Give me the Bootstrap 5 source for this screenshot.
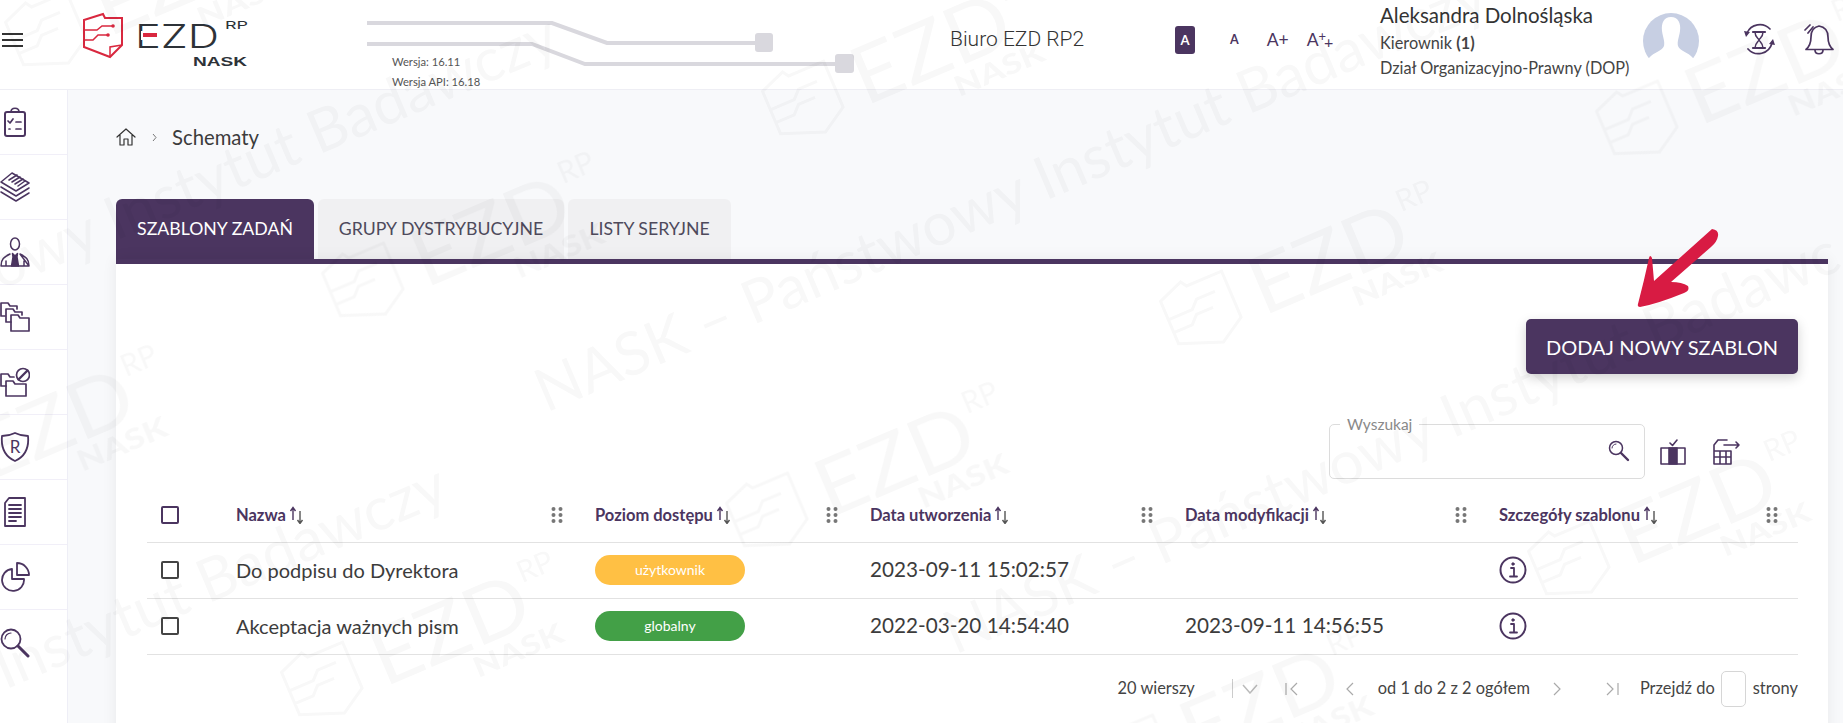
<!DOCTYPE html>
<html lang="pl">
<head>
    <meta charset="UTF-8">
    <meta name="viewport" content="width=device-width, initial-scale=1.0">
    <title>Schematy - EZD RP</title>
    <link href="https://cdn.jsdelivr.net/npm/bootstrap@5.3.0/dist/css/bootstrap.min.css" rel="stylesheet">
    <style>
        :root { --fiolet: #4b3560; }
        html, body { height: 100%; }
        body {
            font-family: "Lato", "Noto Sans", sans-serif;
            color: #3b3b3b;
            background: #f8f9fb;
            overflow: hidden;
            position: relative;
        }
        svg.ik { fill: none; stroke: var(--fiolet); stroke-linecap: round; stroke-linejoin: round; display: block; }

        /* naglowek */
        .top-bar { height: 90px; background: #fff; border-bottom: 1px solid #eeeef4; padding: 0; flex-wrap: nowrap; align-items: stretch; justify-content: flex-start; }
        .hamburger { width: 21px; margin: 33px 0 0 2px; height: 14px; display: flex; flex-direction: column; justify-content: space-between; }
        .hamburger span { height: 2px; background: #333; display: block; }
        .logo-box { width: 180px; margin-left: 58px; margin-top: 12px; }
        .wersje { position: relative; width: 500px; margin-left: 106px; font-size: 11.2px; color: #555; line-height: 20px; padding: 52px 0 0 25px; }
        .wersje svg { position: absolute; left: 0; top: 0; }
        .biuro { margin-left: 83px; width: 225px; font-family: "Roboto", sans-serif; font-weight: 300; font-size: 21px; color: #333; line-height: 78px; }
        .font-sizes { width: 205px; color: var(--fiolet); padding-top: 26px; }
        .fs-on { width: 20px; height: 28px; background: var(--fiolet); color: #fff; border-radius: 3px; font-size: 13px; font-weight: 700; text-align: center; line-height: 28px; }
        .fs-a { font-weight: 700; font-size: 12.5px; margin-left: 35px; line-height: 28px; }
        .fs-b { font-size: 17.5px; margin-left: 28px; line-height: 28px; }
        .fs-c { font-size: 17.5px; margin-left: 18px; line-height: 28px; }
        .fs-c sup { font-size: 13px; top: -.35em; }
        .fs-c sub { font-size: 16px; bottom: -.1em; margin-left: -2px; }
        .user-box { width: 263px; }
        .user-name { font-size: 20.5px; line-height: 30px; color: #333; white-space: nowrap; }
        .user-line { font-size: 16.3px; line-height: 25px; color: #444; white-space: nowrap; }
        .avatar-box { width: 56px; height: 45px; margin-top: 13px; overflow: hidden; }
        .right-icons { margin-left: 44px; gap: 29px; padding-top: 23px; }

        /* boczne menu */
        .side-menu { width: 68px; flex: none; background: #fff; border-right: 1px solid #eeeef6; }
        .side-menu .list-group-item { height: 65px; padding: 0; border: 0; border-bottom: 1px solid #f1eff8; border-radius: 0; display: flex; align-items: center; background: transparent; }

        /* tresc */
        .tresc { flex: 1; padding: 35px 15px 0 48px; min-width: 0; }
        .okruszki { height: 24px; margin-bottom: 50px; font-size: 20.3px; color: #3c3c3c; }
        .okruszki .sep { margin: 0 15px 0 16px; }

        .zakladki { border: 0; gap: 4px; }
        .zakladki .nav-link { height: 60px; border: 0; border-radius: 6px 6px 0 0; margin: 0; background: #f0f0f2; color: #4e4a5c; font-size: 17.7px; line-height: 60px; padding: 0; text-align: center; }
        .zakladki .nav-link.active { background: var(--fiolet); color: #fff; }
        .tab-a { width: 198px; } .tab-b { width: 246px; } .tab-c { width: 163px; }
        .panel { border: 0; border-radius: 0; border-top: 5px solid var(--fiolet); box-shadow: 0 0 14px rgba(0,0,0,.07); padding: 55px 30px 0 31px; height: 500px; }
        .przycisk-wrap { position: relative; }
        .btn-dodaj { background: var(--fiolet); color: #fff; border: 0; height: 55px; width: 272px; font-size: 20px; border-radius: 5px; box-shadow: 0 4px 12px rgba(0,0,0,.18); padding: 0; }
        .btn-dodaj:hover { background: var(--fiolet); color: #fff; }
        .strzalka { position: absolute; left: 106px; top: -93px; }

        .szukaj-row { margin-top: 50px; padding-right: 55px; gap: 15px; }
        .szukaj { position: relative; width: 316px; height: 55px; }
        .szukaj .form-control { height: 55px; border: 1px solid #dcdcdc; border-radius: 5px; box-shadow: none; }
        .szukaj label { position: absolute; left: 11px; top: -10px; background: #fff; padding: 0 7px; font-size: 15.5px; line-height: 20px; color: #8a8a8a; }
        .szukaj svg { position: absolute; right: 15px; top: 15px; }

        .tabela { table-layout: fixed; width: 100%; margin: 10px 0 0; }
        .tabela th, .tabela td { padding: 0; vertical-align: middle; border-bottom: 1px solid #e2e2e2; background: transparent; box-shadow: none; }
        .tabela th { height: 53px; color: var(--fiolet); font-size: 16.5px; font-weight: 700; }
        .tabela td { height: 56px; font-size: 20px; color: #3c3c3c; }
        .tabela td.data { font-size: 20.7px; }
        .c0 { width: 89px; } .c1 { width: 359px; } .c2 { width: 275px; } .c3 { width: 315px; } .c4 { width: 314px; }
        .kolumna { padding-right: 32px; }
        .kolumna-kon { padding-right: 20px; }
        .sort { width: 16px; height: 18px; margin-left: 3px; vertical-align: -3px; }
        .grip { width: 12px; height: 18px; }
        .pole { width: 18px; height: 18px; border: 2px solid #444; border-radius: 2px; margin: 0 0 0 14px; display: block; box-shadow: none; appearance: none; }
        .pole-h { border-color: var(--fiolet); }
        .znacznik { width: 150px; height: 30px; line-height: 30px; padding: 0; font-size: 14px; font-weight: 400; color: #fff; display: block; }
        .zn-user { background: #ffc044; }
        .zn-glob { background: #43a047; }

        .stopka { height: 68px; font-size: 16.4px; color: #444; }
        .sep-pion { width: 1px; height: 19px; background: #ccc; margin-left: 37px; }
        .m-9 { margin-left: 9px; } .m-27 { margin-left: 27px; } .m-47 { margin-left: 47px; }
        .m-24 { margin-left: 24px; } .m-23 { margin-left: 23px; } .m-44 { margin-left: 44px; }
        .m-21 { margin-left: 21px; } .m-6 { margin-left: 6px; } .m-7 { margin-left: 7px; }
        .idz-do { width: 25px; height: 36px; border: 1px solid #d6d6d6; border-radius: 5px; padding: 0; }

        /* znak wodny */
        .znak-wodny { position: absolute; left: 0; top: 0; pointer-events: none; z-index: 10; }
        .znak-wodny text { font-family: "Lato", sans-serif; fill: #000; }
    </style>
</head>
<body>
    <nav class="navbar top-bar">
        <div class="hamburger"><span></span><span></span><span></span></div>
        <!-- logo -->
        <div class="logo-box">
            <svg width="180" height="60" viewBox="0 0 180 60">
                <path d="M3 8 L22 2 L24 6 L41 6 L41 33 L29 45 L3 35 Z" fill="none" stroke="#d9283f" stroke-width="2"/>
                <path d="M3 18 L16 18 L21 14 L32 14 M3 28 L12 28 L17 23 L27 23 M29 45 L29 35 L41 33" fill="none" stroke="#d9283f" stroke-width="1.5"/>
                <circle cx="32" cy="14" r="1.8" fill="#d9283f"/><circle cx="27" cy="23" r="1.8" fill="#d9283f"/>
                <text x="54" y="36" font-family="Inter, sans-serif" font-size="32" font-weight="300" fill="#2d3238" textLength="84" lengthAdjust="spacingAndGlyphs">EZD</text>
                <rect x="60" y="19" width="17" height="9" fill="#fff"/>
                <rect x="62" y="21" width="14" height="4" fill="#d9283f"/>
                <text x="144" y="17" font-family="Inter, sans-serif" font-size="11" fill="#2d3238" textLength="23" lengthAdjust="spacingAndGlyphs">RP</text>
                <text x="112" y="54" font-family="'Liberation Sans', sans-serif" font-size="12.5" font-weight="700" fill="#2d3238" textLength="54" lengthAdjust="spacingAndGlyphs">NASK</text>
            </svg>
        </div>
        <!-- wersje i sciezki -->
        <div class="wersje">
            <svg width="500" height="80" viewBox="0 0 500 80" style="fill:none">
                <path d="M0 23 H185 L240 43 H395 M0 44 H165 L218 64 H475" stroke="#d9d8de" stroke-width="4"/>
                <rect x="388" y="33" width="18" height="19" rx="3" fill="#d9d8de"/>
                <rect x="468" y="54" width="19" height="19" rx="3" fill="#d9d8de"/>
            </svg>
            <div>Wersja: 16.11</div>
            <div>Wersja API: 16.18</div>
        </div>
        <div class="biuro">Biuro EZD RP2</div>
        <div class="font-sizes d-flex">
            <div class="fs-on">A</div>
            <div class="fs-a">A</div>
            <div class="fs-b">A+</div>
            <div class="fs-c">A<sup>+</sup><sub>+</sub></div>
        </div>
        <div class="user-box">
            <div class="user-name">Aleksandra Dolnośląska</div>
            <div class="user-line">Kierownik <b>(1)</b></div>
            <div class="user-line">Dział Organizacyjno-Prawny (DOP)</div>
        </div>
        <div class="avatar-box">
            <svg width="56" height="45" viewBox="0 0 56 45">
                <circle cx="28" cy="28" r="28" fill="#c7cfe3"/>
                <path d="M28 4 C21 4 18 10 19 18 C20 25 22 28 21 33 C19 38 11 39 6 45 H50 C45 39 37 38 35 33 C34 28 36 25 37 18 C38 10 35 4 28 4 Z" fill="#fff"/>
            </svg>
        </div>
        <div class="right-icons d-flex">
            <svg class="ik" width="32" height="33" viewBox="0 0 32 33" stroke-width="1.7">
                <path d="M27 6 A14 14 0 0 0 4 10 M5 26 A14 14 0 0 0 29 20"/>
                <path d="M1 8 L7 9 L3 14 Z M32 22 L26 21 L30 16 Z" fill="#4b3560" stroke="none"/>
                <path d="M10 9 H22 M10 25 H22" stroke-width="2.2"/>
                <path d="M12 9 C12 14 15 15 16 17 C17 15 20 14 20 9 M12 25 C12 20 15 19 16 17 C17 19 20 20 20 25" stroke-width="1.5"/>
            </svg>
            <svg class="ik" width="31" height="33" viewBox="0 0 31 33" stroke-width="1.7">
                <path d="M2 26.5 C6 23 7 19 7 14 C7 8 10 4 15 3 C21 4 24 8 24 14 C24 19 25 23 29 26.5 Z"/>
                <path d="M11 27 C11 32 19 32 19 27"/>
                <path d="M1 7 L6 2 M4 10 L9 4"/>
            </svg>
        </div>
    </nav>

    <div class="d-flex">
        <aside class="side-menu">
            <div class="list-group list-group-flush">
                <a class="list-group-item" href="#"><svg class="ik" width="30" height="30" viewBox="0 0 30 30" stroke-width="2">
                    <rect x="5" y="5" width="20" height="24" rx="2"/><path d="M11 5 C11 0 19 0 19 5" stroke-width="1.6"/><path d="M8 14 L10 16 L13 12 M16 15 H21 M9 22 H10 M16 22 H21" stroke-width="1.7"/></svg></a>
                <a class="list-group-item" href="#"><svg class="ik" width="30" height="30" viewBox="0 0 30 30" stroke-width="1.5">
                    <path d="M12 1 L29 11 L16 19 L1 10 Z"/><path d="M9 8 L17 3 M12 10 L20 5 M15 12 L23 7 M18 14 L25 9"/><path d="M1 15 L16 24 L29 16 M1 20 L16 29 L29 21"/></svg></a>
                <a class="list-group-item" href="#"><svg class="ik" width="30" height="30" viewBox="0 0 30 30" stroke-width="1.5">
                    <ellipse cx="15" cy="7" rx="4.5" ry="6"/><path d="M1 29 C1 22 4 20 10 17 M20 17 C26 20 29 22 29 29 Z M1 29 H29 M6 24 V29 M24 24 V29"/><path d="M12.5 16.5 L15 19 L17.5 16.5 L17 20 L18.5 29 H11.5 L13 20 Z" fill="#4b3560"/></svg></a>
                <a class="list-group-item" href="#"><svg class="ik" width="30" height="30" viewBox="0 0 30 30" stroke-width="1.7">
                    <path d="M5 14 H1 V1 H8 L10 4 H17 V7"/><path d="M11 20 H6 V7 H13 L15 10 H22 V13"/><path d="M11 29 V13 H18 L20 16 H29 V29 Z"/></svg></a>
                <a class="list-group-item" href="#"><svg class="ik" width="30" height="30" viewBox="0 0 30 30" stroke-width="1.7">
                    <path d="M6 19 H1 V7 H8 L10 10 H14"/><path d="M6 29 V14 H13 L15 17 H26 V29 Z"/><circle cx="23" cy="8" r="6.5"/><path d="M18.5 12.5 L27.5 3.5" stroke-width="2.4"/></svg></a>
                <a class="list-group-item" href="#"><svg class="ik" width="30" height="30" viewBox="0 0 30 30" stroke-width="1.8">
                    <path d="M15 1 C19 3 24 4 28 4 C29 14 26 24 15 29 C4 24 1 14 2 4 C6 4 11 3 15 1 Z"/><text x="15" y="21" text-anchor="middle" font-size="17" font-family="Lato, sans-serif" fill="#4b3560" stroke="none">R</text></svg></a>
                <a class="list-group-item" href="#"><svg class="ik" width="30" height="30" viewBox="0 0 30 30" stroke-width="1.8">
                    <path d="M9 1 H25 V29 H5 V6 Z"/><path d="M9 8 H21 M9 12 H21 M9 16 H21 M9 20 H21 M9 24 H16"/></svg></a>
                <a class="list-group-item" href="#"><svg class="ik" width="30" height="30" viewBox="0 0 30 30" stroke-width="1.8">
                    <path d="M12 7 A11 11 0 1 0 24 17 H12 Z"/><path d="M17 1 A12 12 0 0 1 29 13 H17 Z"/></svg></a>
                <a class="list-group-item" href="#"><svg class="ik" width="30" height="30" viewBox="0 0 30 30" stroke-width="1.8">
                    <circle cx="11" cy="11" r="9.5"/><path d="M5 11 A6 6 0 0 1 11 5" stroke-width="1.2"/><path d="M18 18 L28 28" stroke-width="3"/></svg></a>
            </div>
        </aside>

        <main class="tresc">
            <div class="okruszki d-flex align-items-center">
                <svg class="ik" width="20" height="18" viewBox="0 0 20 18" stroke-width="1.2" style="stroke:#333"><path d="M1 9 L10 1 L19 9 M4 7 V17 H8 V11 H12 V17 H16 V7"/></svg>
                <svg class="sep" width="5" height="9" viewBox="0 0 5 9"><path d="M1 1 L4 4.5 L1 8" fill="none" stroke="#777"/></svg>
                <span>Schematy</span>
            </div>

            <ul class="nav nav-tabs zakladki">
                <li class="nav-item"><a class="nav-link tab-a active" href="#">SZABLONY ZADAŃ</a></li>
                <li class="nav-item"><a class="nav-link tab-b" href="#">GRUPY DYSTRYBUCYJNE</a></li>
                <li class="nav-item"><a class="nav-link tab-c" href="#">LISTY SERYJNE</a></li>
            </ul>

            <div class="card panel">
                <div class="d-flex justify-content-end">
                    <div class="przycisk-wrap">
                        <button type="button" class="btn btn-dodaj">DODAJ NOWY SZABLON</button>
                        <svg class="strzalka" width="90" height="85" viewBox="0 0 90 85">
                            <path d="M80 3 Q87 4 86 10 Q85 16 79 21 L39 56 Q50 56 56 60 Q58 65 52 67 Q25 78 8 81 Q5 81 6 78 Q12 55 17 32 Q18 28 20 32 L22 55 Z" fill="#d81b43"/>
                        </svg>
                    </div>
                </div>

                <div class="szukaj-row d-flex justify-content-end align-items-center">
                    <div class="szukaj">
                        <label for="szukajPole">Wyszukaj</label>
                        <input type="text" class="form-control" id="szukajPole">
                        <svg class="ik" width="22" height="24" viewBox="0 0 22 24" stroke-width="1.5"><circle cx="8" cy="9" r="6.5"/><path d="M4 9 A4 4 0 0 1 8 5" stroke-width="1"/><path d="M13 14 L20 21" stroke-width="2.4"/></svg>
                    </div>
                    <svg class="ik" width="26" height="26" viewBox="0 0 26 26" stroke-width="1.6">
                        <rect x="1" y="9" width="24" height="16"/><rect x="9" y="9" width="8" height="16" fill="#4b3560"/><path d="M10 4 L12.5 6.5 L17 1"/></svg>
                    <svg class="ik" width="30" height="26" viewBox="0 0 30 26" stroke-width="1.6" style="margin-left:12px">
                        <path d="M5 1 H14 M5 1 L1 6 V25 H18 V12 M1 12 H18 M1 18 H18 M7 12 V25 M13 12 V25"/><path d="M11 6 H26 M23 3 L26 6 L23 9"/></svg>
                </div>

                <table class="table tabela">
                    <thead>
                        <tr>
                            <th class="c0"><input class="pole pole-h" type="checkbox" aria-label="Zaznacz wszystkie"></th>
                            <th class="c1"><div class="kolumna d-flex justify-content-between align-items-center"><span>Nazwa<svg class="sort"><use href="#sortIk"/></svg></span><svg class="grip"><use href="#gripIk"/></svg></div></th>
                            <th class="c2"><div class="kolumna d-flex justify-content-between align-items-center"><span>Poziom dostępu<svg class="sort"><use href="#sortIk"/></svg></span><svg class="grip"><use href="#gripIk"/></svg></div></th>
                            <th class="c3"><div class="kolumna d-flex justify-content-between align-items-center"><span>Data utworzenia<svg class="sort"><use href="#sortIk"/></svg></span><svg class="grip"><use href="#gripIk"/></svg></div></th>
                            <th class="c4"><div class="kolumna d-flex justify-content-between align-items-center"><span>Data modyfikacji<svg class="sort"><use href="#sortIk"/></svg></span><svg class="grip"><use href="#gripIk"/></svg></div></th>
                            <th><div class="kolumna-kon d-flex justify-content-between align-items-center"><span>Szczegóły szablonu<svg class="sort"><use href="#sortIk"/></svg></span><svg class="grip"><use href="#gripIk"/></svg></div></th>
                        </tr>
                    </thead>
                    <tbody>
                        <tr>
                            <td><input class="pole" type="checkbox" aria-label="Zaznacz"></td>
                            <td>Do podpisu do Dyrektora</td>
                            <td><span class="badge rounded-pill znacznik zn-user">użytkownik</span></td>
                            <td class="data">2023-09-11 15:02:57</td>
                            <td></td>
                            <td><svg class="ik" width="28" height="28"><use href="#infoIk"/></svg></td>
                        </tr>
                        <tr>
                            <td><input class="pole" type="checkbox" aria-label="Zaznacz"></td>
                            <td>Akceptacja ważnych pism</td>
                            <td><span class="badge rounded-pill znacznik zn-glob">globalny</span></td>
                            <td class="data">2022-03-20 14:54:40</td>
                            <td class="data">2023-09-11 14:56:55</td>
                            <td><svg class="ik" width="28" height="28"><use href="#infoIk"/></svg></td>
                        </tr>
                    </tbody>
                </table>

                <!-- stronicowanie -->
                <div class="stopka d-flex justify-content-end align-items-center">
                    <span>20 wierszy</span>
                    <span class="sep-pion"></span>
                    <svg class="m-9" width="16" height="10" viewBox="0 0 16 10"><path d="M1 1 L8 9 L15 1" fill="none" stroke="#bbb" stroke-width="1.5"/></svg>
                    <svg class="m-27" width="14" height="14" viewBox="0 0 14 14"><path d="M1 1 V13 M12 1 L6 7 L12 13" fill="none" stroke="#aaa" stroke-width="1.2"/></svg>
                    <svg class="m-47" width="8" height="14" viewBox="0 0 8 14"><path d="M7 1 L1 7 L7 13" fill="none" stroke="#aaa" stroke-width="1.2"/></svg>
                    <span class="m-24">od 1 do 2 z 2 ogółem</span>
                    <svg class="m-23" width="8" height="14" viewBox="0 0 8 14"><path d="M1 1 L7 7 L1 13" fill="none" stroke="#aaa" stroke-width="1.2"/></svg>
                    <svg class="m-44" width="14" height="14" viewBox="0 0 14 14"><path d="M2 1 L8 7 L2 13 M13 1 V13" fill="none" stroke="#aaa" stroke-width="1.2"/></svg>
                    <span class="m-21">Przejdź do</span>
                    <input class="idz-do m-6" type="text" aria-label="Strona">
                    <span class="m-7">strony</span>
                </div>
            </div>
        </main>
    </div>

    <!-- znak wodny -->
    <svg class="znak-wodny" width="1843" height="723" viewBox="0 0 1843 723">
        <defs>
            <symbol id="sortIk" viewBox="0 0 16 18"><path d="M4 14 V2 M1.5 5 L4 1.5 L6.5 5" stroke="#4b3560" fill="none" stroke-width="1.4"/><path d="M11 5 V17 M8.5 14 L11 17.5 L13.5 14" stroke="#555" fill="none" stroke-width="1.4"/></symbol>
            <symbol id="gripIk" viewBox="0 0 12 18"><g fill="#777"><circle cx="2.5" cy="3" r="2"/><circle cx="9.5" cy="3" r="2"/><circle cx="2.5" cy="9" r="2"/><circle cx="9.5" cy="9" r="2"/><circle cx="2.5" cy="15" r="2"/><circle cx="9.5" cy="15" r="2"/></g></symbol>
            <symbol id="infoIk" viewBox="0 0 28 28"><circle cx="14" cy="14" r="12.5" fill="none" stroke="#4b3560" stroke-width="2"/><path d="M12 12 H15 V20 M11 20.5 H18" fill="none" stroke="#4b3560" stroke-width="1.8"/><circle cx="14" cy="8" r="1.2" fill="#4b3560"/></symbol>
            <g id="znakLogo">
                <path d="M-34 -26 L-8 -36 L-4 -30 L34 -30 L34 20 L8 36 L-34 20 Z M-34 -6 L-8 -6 L0 -14 L20 -14 M-34 8 L-14 8 L-6 0 L12 0" fill="none" stroke="#000" stroke-width="3"/>
                <text x="55" y="28" font-size="80" textLength="165" lengthAdjust="spacingAndGlyphs">EZD</text>
                <text x="222" y="-14" font-size="30">RP</text>
                <text x="145" y="56" font-size="28" font-weight="900" textLength="95" lengthAdjust="spacingAndGlyphs">NASK</text>
            </g>
        </defs>
        <g opacity=".03">
            <text font-size="60" transform="translate(0 290) rotate(-23)">owy Instytut Badawczy</text>
            <text font-size="60" transform="translate(546 413) rotate(-23)">NASK – Państwowy Instytut Badawczy</text>
            <text font-size="60" transform="translate(955 655) rotate(-23.5)">NASK – Państwowy Instytut Badawc</text>
            <text font-size="60" transform="translate(5 690) rotate(-23)">Instytut Badawczy</text>
            <use href="#znakLogo" transform="translate(47 33) rotate(-23)"/>
            <use href="#znakLogo" transform="translate(804 102) rotate(-23)"/>
            <use href="#znakLogo" transform="translate(364 284) rotate(-23)"/>
            <use href="#znakLogo" transform="translate(-73 477) rotate(-23)"/>
            <use href="#znakLogo" transform="translate(768 514) rotate(-23)"/>
            <use href="#znakLogo" transform="translate(1202 312) rotate(-23)"/>
            <use href="#znakLogo" transform="translate(1570 562) rotate(-23)"/>
            <use href="#znakLogo" transform="translate(1638 122) rotate(-23)"/>
            <use href="#znakLogo" transform="translate(323 683) rotate(-23)"/>
            <use href="#znakLogo" transform="translate(1133 756) rotate(-23)"/>
        </g>
    </svg>

    <script src="https://cdn.jsdelivr.net/npm/bootstrap@5.3.0/dist/js/bootstrap.bundle.min.js"></script>
</body>
</html>
